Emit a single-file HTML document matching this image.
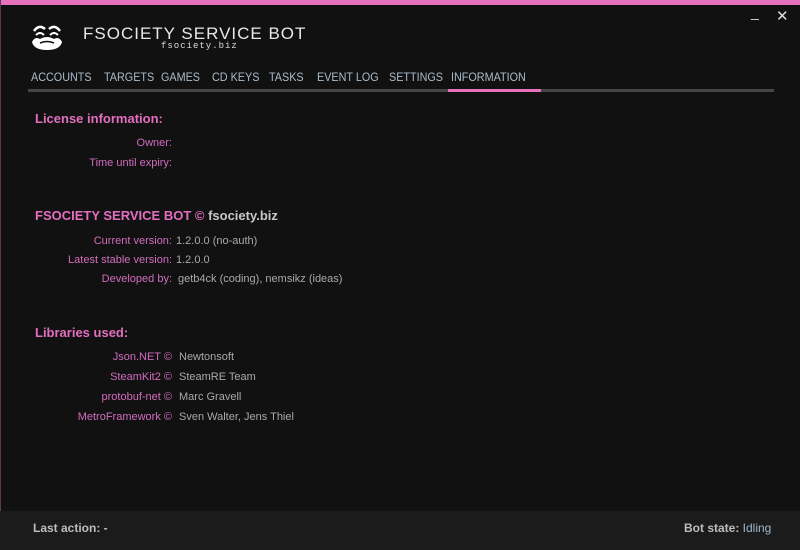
<!DOCTYPE html>
<html><head><meta charset="utf-8"><style>
html,body{margin:0;padding:0}
body{width:800px;height:550px;background:#111;position:relative;overflow:hidden;font-family:"Liberation Sans",sans-serif}
.a{position:absolute;white-space:nowrap}
.top{left:0;top:0;width:800px;height:5px;background:#e672bd}
.lb{left:0;top:0;width:1px;height:550px;background:#5a3a50}
.title{left:83px;top:24px;font-size:17px;color:#e8e8e8;letter-spacing:1px;font-weight:300}
.sub{left:161px;top:41px;font-size:9px;color:#ddd;letter-spacing:1px;font-family:"Liberation Mono",monospace}
.tab{top:70px;font-size:12px;color:#a9bccc;transform:scaleX(0.9);transform-origin:0 0}
.line{left:28px;top:89px;width:746px;height:3px;background:#454545}
.sel{left:448px;top:89px;width:93px;height:3px;background:#e672bd}
.h{left:35px;font-size:13px;font-weight:bold;color:#e46fc0}
.l{font-size:11px;color:#d26cbf;text-align:right;right:628px}
.v{left:176px;font-size:11px;color:#a9a9a9}
.bot{left:0;top:511px;width:800px;height:39px;background:#1b1b1b}
.bt{top:521px;font-size:12px;font-weight:bold;color:#bdbdbd}
</style></head><body>
<div class="a top"></div>
<div class="a lb"></div>
<svg class="a" style="left:30px;top:23px" width="34" height="28" viewBox="0 0 34 28">
<path d="M4 8 Q9 1 15 6 M19 6 Q25 1 30 8" stroke="#fff" stroke-width="2.5" fill="none"/>
<path d="M6 12 Q10 8 14 12 M20 12 Q24 8 28 12" stroke="#fff" stroke-width="2" fill="none"/>
<path d="M2 19 Q5 13 10 16 Q17 12 24 16 Q29 13 32 19 Q30 27 17 27 Q4 27 2 19Z" fill="#fff"/>
<path d="M10 20 Q17 17 24 20" stroke="#111" stroke-width="1.5" fill="none"/>
</svg>
<div class="a title">FSOCIETY SERVICE BOT</div>
<div class="a sub">fsociety.biz</div>
<div class="a" style="left:751px;top:4px;color:#ddd;font-size:14px">_</div>
<div class="a" style="left:776px;top:7px;color:#ddd;font-size:15px">✕</div>
<div class="a tab" style="left:31px">ACCOUNTS</div>
<div class="a tab" style="left:104px">TARGETS</div>
<div class="a tab" style="left:161px">GAMES</div>
<div class="a tab" style="left:212px">CD KEYS</div>
<div class="a tab" style="left:269px">TASKS</div>
<div class="a tab" style="left:317px">EVENT LOG</div>
<div class="a tab" style="left:389px">SETTINGS</div>
<div class="a tab" style="left:451px">INFORMATION</div>
<div class="a line"></div><div class="a sel"></div>

<div class="a h" style="top:111px">License information:</div>
<div class="a l" style="top:137px">Owner:</div>
<div class="a l" style="top:157px">Time until expiry:</div>

<div class="a h" style="top:208px">FSOCIETY SERVICE BOT © <span style="color:#c8c8c8">fsociety.biz</span></div>
<div class="a l" style="top:235px">Current version:</div><div class="a v" style="top:235px">1.2.0.0 (no-auth)</div>
<div class="a l" style="top:254px">Latest stable version:</div><div class="a v" style="top:254px">1.2.0.0</div>
<div class="a l" style="top:273px">Developed by:</div><div class="a v" style="top:273px;left:178px">getb4ck (coding), nemsikz (ideas)</div>

<div class="a h" style="top:325px">Libraries used:</div>
<div class="a l" style="top:351px">Json.NET ©</div><div class="a v" style="top:351px;left:179px">Newtonsoft</div>
<div class="a l" style="top:371px">SteamKit2 ©</div><div class="a v" style="top:371px;left:179px">SteamRE Team</div>
<div class="a l" style="top:391px">protobuf-net ©</div><div class="a v" style="top:391px;left:179px">Marc Gravell</div>
<div class="a l" style="top:411px">MetroFramework ©</div><div class="a v" style="top:411px;left:179px">Sven Walter, Jens Thiel</div>

<div class="a bot"></div>
<div class="a bt" style="left:33px">Last action: -</div>
<div class="a bt" style="left:684px">Bot state: <span style="font-weight:normal;color:#9fb6c8">Idling</span></div>
</body></html>
